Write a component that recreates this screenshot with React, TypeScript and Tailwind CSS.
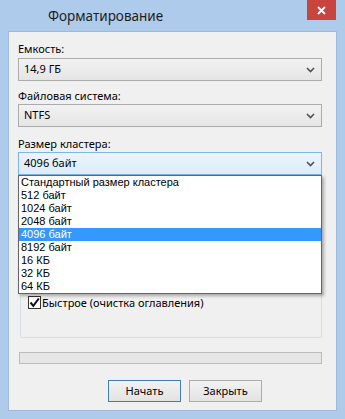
const Chevron = () => (
  <svg width="9" height="6" viewBox="0 0 9 6" className="text-[#505050]">
    <path d="M1 1 L4.5 4.5 L8 1" fill="none" stroke="currentColor" strokeWidth="1.6" />
  </svg>
);

const Select = ({ value, focused }: { value: string; focused?: boolean }) => (
  <div
    className={
      focused
        ? "h-[23px] flex items-center justify-between pl-[5px] pr-[6px] border border-[#7eb4ea] bg-gradient-to-b from-[#ecf4fc] to-[#dcecfc]"
        : "h-[23px] flex items-center justify-between pl-[5px] pr-[6px] border border-[#acacac] bg-gradient-to-b from-[#f2f2f2] to-[#e5e5e5]"
    }
  >
    <span className="text-[11px] text-black">{value}</span>
    <Chevron />
  </div>
);

const items = [
  "Стандартный размер кластера",
  "512 байт",
  "1024 байт",
  "2048 байт",
  "4096 байт",
  "8192 байт",
  "16 КБ",
  "32 КБ",
  "64 КБ",
];

const App = () => {
  return (
    <div
      className="w-[345px] h-[419px] bg-[#aecbeb] flex flex-col overflow-hidden"
      style={{ fontFamily: '"Noto Sans", "Open Sans", sans-serif' }}
    >
      <div className="h-[31px] relative flex items-center shrink-0">
        <span className="ml-[48px] text-[13.5px] text-[#1e1e1e] mt-[1px]">Форматирование</span>
        <div className="absolute right-[9px] top-0 w-[29px] h-[20px] bg-[#c7453c] flex items-center justify-center">
          <svg width="9" height="9" viewBox="0 0 9 9">
            <path d="M1 1 L8 8 M8 1 L1 8" stroke="white" strokeWidth="1.8" />
          </svg>
        </div>
      </div>

      <div className="mx-[8px] mb-[8px] flex-1 bg-[#f0f0f0] border border-[#9fbbd9] relative pl-[9px] pr-[14px] pt-[9px]">
        <div className="text-[11px] leading-[15px] text-black">Емкость:</div>
        <div className="mt-[2px]">
          <Select value="14,9 ГБ" />
        </div>
        <div className="text-[11px] leading-[15px] text-black mt-[7px]">Файловая система:</div>
        <div className="mt-[1px]">
          <Select value="NTFS" />
        </div>
        <div className="text-[11px] leading-[15px] text-black mt-[9px]">Размер кластера:</div>
        <div className="mt-[1px]">
          <Select value="4096 байт" focused />
        </div>

        <div className="ml-[2px] mt-[9px] h-[154px] border border-[#d5dfe5] rounded-[2px] flex flex-col justify-end pb-[28px] pl-[7px]">
          <div className="flex items-center gap-[1px]">
            <div className="w-[13px] h-[13px] border border-[#333] bg-white flex items-center justify-center">
              <svg width="11" height="11" viewBox="0 0 11 11">
                <path d="M1.5 5.5 L4.3 8.8 L9.8 1.5" fill="none" stroke="#111" strokeWidth="2" />
              </svg>
            </div>
            <span className="text-[11px] leading-[13px] text-black">Быстрое (очистка оглавления)</span>
          </div>
        </div>

        <div className="mt-[14px] ml-[1px] h-[12px] border border-[#bcbcbc] bg-[#e6e6e6]" />

        <div className="mt-[16px] flex gap-[8px] pl-[90px]">
          <button className="w-[73px] h-[22px] border border-[#3c7fb1] bg-gradient-to-b from-[#f2f2f2] to-[#e3e3e3] text-[11px] text-black">
            Начать
          </button>
          <button className="w-[73px] h-[22px] border border-[#acacac] bg-gradient-to-b from-[#f2f2f2] to-[#e3e3e3] text-[11px] text-black">
            Закрыть
          </button>
        </div>

        <div
          className="absolute left-[9px] top-[143px] w-[304px] bg-white border border-[#646464] shadow-[2px_2px_3px_rgba(0,0,0,0.3)]"
          style={{ fontFamily: '"Liberation Sans", Arial, sans-serif' }}
        >
          {items.map((it) => (
            <div
              key={it}
              className={
                it === "4096 байт"
                  ? "h-[13px] leading-[13px] pl-[2px] text-[11px] bg-[#3399ff] text-white"
                  : "h-[13px] leading-[13px] pl-[2px] text-[11px] text-black"
              }
            >
              {it}
            </div>
          ))}
        </div>
      </div>
    </div>
  );
};

export default App;
